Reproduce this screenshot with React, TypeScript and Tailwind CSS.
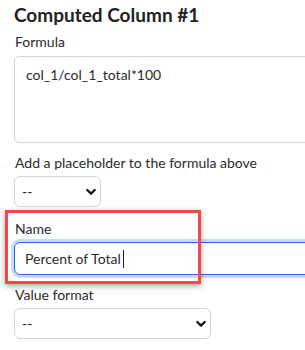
import React from 'react';

function Chevron() {
  return (
    <svg width="12" height="12" viewBox="0 0 12 12" className="shrink-0">
      <path d="M2.3 4 L6 7.7 L9.7 4" fill="none" stroke="#1a1a1a" strokeWidth="2.4" strokeLinecap="round" strokeLinejoin="round" />
    </svg>
  );
}

function Select({ width }: { width: string }) {
  return (
    <div className={`${width} h-[31px] flex items-center justify-between pl-[7px] pr-[3px] border border-[#d4d4d4] rounded-[6px] bg-white text-[14px] text-[#222]`}>
      <span>--</span>
      <Chevron />
    </div>
  );
}

export default function App() {
  return (
    <div className="w-[305px] h-[350px] overflow-hidden bg-white font-['Lato',sans-serif] text-[#2b2b2b]">
      <div className="pl-[14px]">
        <h1 className="text-[19px] font-bold leading-[24px] text-[#222] pt-[3px]">Computed Column #1</h1>

        {/* Formula */}
        <div className="mt-[6px] text-[14px] leading-[18px] pl-[1px]">Formula</div>
        <div className="mt-[5px] w-[320px] h-[87px] border border-[#d4d4d4] rounded-[5px] px-[11px] pt-[9px] text-[14px] leading-[18px]">
          col_1/col_1_total*100
        </div>

        <div className="mt-[11px] text-[14px] leading-[18px] pl-[1px]">Add a placeholder to the formula above</div>
        <div className="mt-[4px]">
          <Select width="w-[87px]" />
        </div>
      </div>

      {/* Name */}
      <div className="relative pl-[14px] mt-[3px]">
        <div className="absolute left-[5px] top-0 w-[196px] h-[74px] border-[3px] border-[#f24848] shadow-[0_2px_6px_rgba(0,0,0,0.35)] pointer-events-none z-10" />
        <div className="pt-[10px] text-[14px] leading-[18px] pl-[1px]">Name</div>
        <div className="mt-[4px] w-[320px] h-[33px] border border-[#2a62e0] rounded-[6px] ring-[3px] ring-[#c4dcf6] flex items-center pl-[10px] text-[14px] text-[#2b2b2b]">
          <span>Percent of Total</span>
          <span className="ml-[2px] w-px h-[18px] bg-[#222]" />
        </div>
      </div>

      <div className="pl-[14px]">
        <div className="mt-[11px] text-[14px] leading-[18px] pl-[1px]">Value format</div>
        <div className="mt-[4px]">
          <Select width="w-[197px]" />
        </div>
      </div>
    </div>
  );
}
